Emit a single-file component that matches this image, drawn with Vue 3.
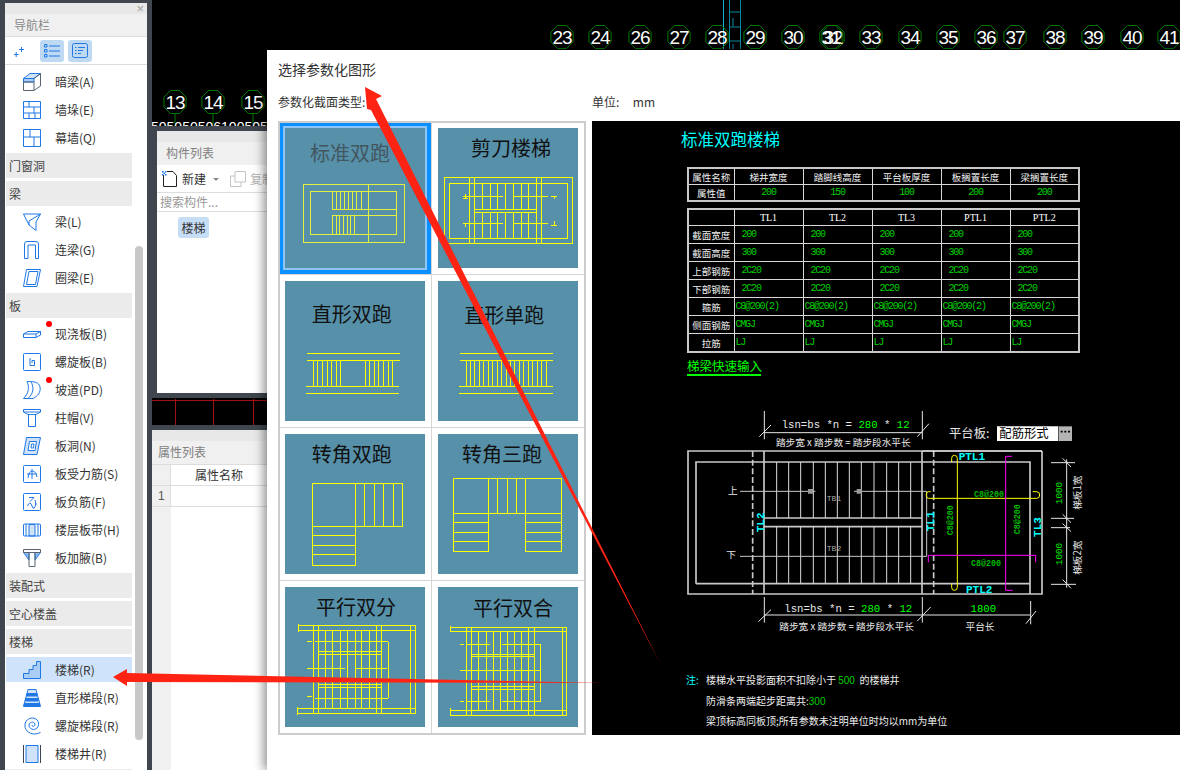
<script setup>
const navItems = [
  { label: '暗梁(A)', icon: 'hidden' },
  { label: '墙垛(E)', icon: 'pier' },
  { label: '幕墙(Q)', icon: 'curtain' },
  { label: '门窗洞', section: true },
  { label: '梁', section: true },
  { label: '梁(L)', icon: 'beam' },
  { label: '连梁(G)', icon: 'link' },
  { label: '圈梁(E)', icon: 'ring' },
  { label: '板', section: true },
  { label: '现浇板(B)', icon: 'slab', dot: true },
  { label: '螺旋板(B)', icon: 'spiralSlab' },
  { label: '坡道(PD)', icon: 'ramp', dot: true },
  { label: '柱帽(V)', icon: 'cap' },
  { label: '板洞(N)', icon: 'hole' },
  { label: '板受力筋(S)', icon: 'rebarS' },
  { label: '板负筋(F)', icon: 'rebarF' },
  { label: '楼层板带(H)', icon: 'strip' },
  { label: '板加腋(B)', icon: 'haunch' },
  { label: '装配式', section: true },
  { label: '空心楼盖', section: true },
  { label: '楼梯', section: true },
  { label: '楼梯(R)', icon: 'stair', active: true },
  { label: '直形梯段(R)', icon: 'flight' },
  { label: '螺旋梯段(R)', icon: 'spiral' },
  { label: '楼梯井(R)', icon: 'well' },
  { label: '', section: true }
]

const blue = '#1f78e6'
const pale = '#cfe2f8'
const icons = {
  hidden: [
    { d: 'M.5 5.5H11L17.5 .5H7Z', fill: pale },
    { d: 'M.5 5.5H11V9H.5Z', fill: '#a9cdf5' },
    { d: 'M.5 9H11V17.5H.5Z', stroke: '#5a6470' },
    { d: 'M11 5.5L17.5 .5V13L11 17.5', stroke: '#5a6470' }
  ],
  pier: [{ d: 'M.5 .5H17.5V17.5H.5Z M.5 6H17.5 M.5 12H17.5 M6 .5V6 M11 6V12 M6 12V17.5 M12 12V17.5' }],
  curtain: [{ d: 'M.5 .5H17.5V17.5H.5Z M.5 8H17.5 M7 .5V8 M11 8V17.5' }],
  beam: [{ d: 'M.5 1H17.5L13 9V17.5L6 12L.5 1 M17.5 1L6 8V12' }],
  link: [{ d: 'M1.5 17.5V3A2.5 2.5 0 0 1 4 .5H13A2.5 2.5 0 0 1 15.5 3V17.5H12.5V4H5V17.5Z' }],
  ring: [{ d: 'M3.5 .5H17.5L14 17.5H.5Z M6 2.5H15L12.5 15.5H3.5Z' }],
  slab: [{ d: 'M.5 9L5 6.5H17.5V10L13 12.5H.5Z M.5 9H13V12.5 M13 9L17.5 6.5' }],
  spiralSlab: [{ d: 'M1.5 .5H16.5A1 1 0 0 1 17.5 1.5V16.5A1 1 0 0 1 16.5 17.5H1.5A1 1 0 0 1 .5 16.5V1.5A1 1 0 0 1 1.5 .5Z M7 5V12.5H11.5V7.5H9V10' }],
  ramp: [{ d: 'M.5 17.5C5 13 7 7 4 .5C11 .5 16 1 17 6C18 11 15 15 10 17.5Z M8 .8C11 6 11 12 5 17.5' }],
  cap: [{ d: 'M.5 .5H17.5V3L13 5.5H5L.5 3Z M.5 3H17.5 M5.5 5.5V17.5H12.5V5.5' }],
  hole: [{ d: 'M3.5 .5H17.5L14 17.5H.5Z', fill: pale }, { d: 'M6.5 4.5H13.5L12 13.5H5Z M8.5 7H11L10.5 11H8Z', fill: '#fff' }],
  rebarS: [{ d: 'M1.5 .5H16.5A1 1 0 0 1 17.5 1.5V16.5A1 1 0 0 1 16.5 17.5H1.5A1 1 0 0 1 .5 16.5V1.5A1 1 0 0 1 1.5 .5Z M4 9H14 M9 4V14 M5 13Q6 6 9 6Q13 6 14 12' }],
  rebarF: [{ d: 'M1.5 .5H16.5A1 1 0 0 1 17.5 1.5V16.5A1 1 0 0 1 16.5 17.5H1.5A1 1 0 0 1 .5 16.5V1.5A1 1 0 0 1 1.5 .5Z M6 4.5H11L7 8.5 M4.5 13Q7 7 9 13T13 10 M12 7L13 12' }],
  strip: [
    { d: 'M6 3.5H12V15H6Z', fill: pale },
    { d: 'M1.5 3H16.5A1 1 0 0 1 17.5 4V14A1 1 0 0 1 16.5 15H1.5A1 1 0 0 1 .5 14V4A1 1 0 0 1 1.5 3Z M3 3V15 M15 3V15' }
  ],
  haunch: [
    { d: 'M.5 3.5L6 11V3.5Z M17.5 3.5L12 11V3.5Z', fill: '#8dbcf2' },
    { d: 'M.5 .5H17.5V3.5H.5Z M6 3.5V17.5H12V3.5', stroke: '#5a6470' }
  ],
  stair: [{ d: 'M.5 17.5V12.5H6V8.5H10V4.5H13.5V.5H17.5V17.5Z', fill: '#a9cdf5' }],
  flight: [
    { d: 'M5 .5H13L17.5 17.5H.5Z', fill: pale },
    { d: 'M4 4.500H14V7H3.300ZM2.800 9.500H15.200V12H2.200ZM1.400 14.500H16.600V17H1Z', fill: blue }
  ],
  spiral: [{ d: 'M17.5 15.5Q10 19 4.5 14.5C-.5 9.500 2 1.500 9 1C15 .8 17.500 7 14 11C11 14 6 12 6 8C6 5 11 4 12 7C12 10 9 10 9 8' }],
  well: [
    { d: 'M3 .5H15V17.5H3Z', fill: pale },
    { d: 'M.5 0V18 M17.500 0V18', stroke: '#3d4650' }
  ]
}

const rulerLow = [
  { n: 13, x: 175 },
  { n: 14, x: 213 },
  { n: 15, x: 253 }
]
const rulerHigh = [
  [23, 562], [24, 600], [26, 640], [27, 679], [28, 717], [29, 755], [30, 793], [32, 833], [31, 831],
  [33, 871], [34, 910], [35, 948], [36, 986], [37, 1015], [38, 1055], [39, 1093], [40, 1132], [41, 1169]
].map(([n, x]) => ({ n, x }))

const octagon = (cx, cy) => {
  const pts = []
  for (let i = 0; i < 8; i++) {
    const a = (Math.PI / 4) * i + Math.PI / 8
    pts.push(`${(cx + Math.cos(a) * 12).toFixed(1)},${(cy + Math.sin(a) * 12.5).toFixed(1)}`)
  }
  return pts.join(' ')
}

// drawing helpers, the tile pictures are 420 units wide for 140px
const box = (x1, y1, x2, y2) => `M${x1} ${y1}H${x2}V${y2}H${x1}Z `
const vs = (xs, y1, y2) => xs.map((x) => `M${x} ${y1}V${y2} `).join('')
const hs = (ys, x1, x2) => ys.map((y) => `M${x1} ${y}H${x2} `).join('')
const steps = (from, to, count) => Array.from({ length: count }, (_, i) => from + ((to - from) * i) / (count - 1))

const tiles = [
  {
    title: '标准双跑', x: 195, y: 98, selected: true,
    d: box(55, 169, 357, 344) + box(75, 189, 335, 319) + vs([250], 169, 344) +
      vs(steps(142, 228, 8), 189, 243) + vs(steps(142, 208, 7), 263, 319) +
      hs([243, 263], 142, 335) + vs([142], 189, 243) + vs([142], 263, 319)
  },
  {
    title: '剪刀楼梯', x: 219, y: 84,
    d: box(19, 148, 403, 346) + box(34, 166, 389, 331) + vs([94, 109, 296, 311], 148, 346) +
      hs([245, 254], 109, 296) + vs([132, 156, 179, 202, 226, 249, 272], 166, 245) +
      vs([132, 156, 179, 202, 226, 249, 272], 254, 331) +
      hs([204, 286], 74, 196) + hs([204, 286], 226, 331) +
      hs([210, 286], 74, 90) + hs([204, 292], 340, 356) + vs([82], 198, 210) + vs([348], 204, 214) + vs([82], 286, 296) + vs([348], 280, 292)
  },
  {
    title: '直形双跑', x: 200, y: 122,
    d: hs([218, 238], 65, 345) + hs([316, 337], 63, 343) + vs(steps(85, 167, 7), 238, 316) + vs(steps(240, 323, 7), 238, 316)
  },
  {
    title: '直形单跑', x: 199, y: 125,
    d: hs([218, 238], 66, 346) + hs([316, 337], 64, 344) + vs(steps(84, 324, 19), 238, 316)
  },
  {
    title: '转角双跑', x: 200, y: 83,
    d: box(82, 148, 353, 278) + box(82, 278, 212, 393) + vs([212, 238, 268, 295, 325], 148, 278) + hs([304, 334, 361], 82, 212)
  },
  {
    title: '转角三跑', x: 192, y: 83,
    d: box(46, 133, 371, 238) + box(46, 238, 152, 353) + box(262, 238, 371, 353) +
      vs([152, 178, 208, 236, 262], 133, 238) + hs([266, 296, 322], 46, 152) + hs([266, 296, 322], 262, 371)
  },
  {
    title: '平行双分', x: 213, y: 84,
    d: hs([116, 131, 364, 380], 40, 392) + vs([375, 392], 116, 380) + vs([85, 101, 275, 290], 116, 380) +
      vs([40], 112, 135) + vs([36], 360, 384) + vs([310], 164, 334) + hs([164, 334], 90, 310) +
      hs([194, 202, 292, 302], 101, 290) + hs([244], 65, 180) + hs([244], 210, 305) +
      hs([164, 329], 66, 80) + vs([120, 142, 165, 188, 210, 230, 253], 131, 364)
  },
  {
    title: '平行双合', x: 225, y: 88,
    d: hs([121, 132, 371, 385], 36, 386) + vs([373, 386], 121, 385) + vs([86, 100, 272, 290], 121, 385) +
      vs([36], 116, 136) + vs([36], 362, 388) + vs([308], 172, 342) +
      hs([172, 342], 86, 156) + hs([172, 342], 191, 308) + hs([201, 207, 297, 307], 100, 290) + hs([251], 66, 308) +
      hs([172, 342], 66, 78) + vs([121, 144, 166, 186, 208, 229, 251], 132, 371)
  }
]

const topHeads = ['属性名称', '梯井宽度', '踏脚线高度', '平台板厚度', '板搁置长度', '梁搁置长度']
const topValues = [200, 150, 100, 200, 200]
const beams = ['TL1', 'TL2', 'TL3', 'PTL1', 'PTL2']
const beamRows = [
  { name: '截面宽度', value: '200', pad: true },
  { name: '截面高度', value: '300', pad: true },
  { name: '上部钢筋', value: '2C20', pad: true },
  { name: '下部钢筋', value: '2C20', pad: true },
  { name: '箍筋', value: 'C8@200(2)' },
  { name: '侧面钢筋', value: 'CMGJ' },
  { name: '拉筋', value: 'LJ' }
]
const treads = [320, 356, 392, 430, 466, 502, 538, 574, 612, 650, 686, 722]
</script>

<template>
  <div class="desktop">
    <svg class="cad-back" width="1180" height="770" viewBox="0 0 1180 770">
      <g fill="none" stroke="#0b8ba3">
        <path d="M723.500 0V49" stroke="#11b5cc" />
        <path d="M729.500 0V49M740.500 0V49M729 12H740M729 27H740M729 41H740M733 18V26M733 44V49" />
      </g>
      <g v-for="mark in rulerHigh" :key="mark.n">
        <polygon :points="octagon(mark.x, 37)" fill="none" stroke="#007a00" />
        <text class="ruler-num" :x="mark.x" y="44">{{ mark.n }}</text>
      </g>
      <g v-for="mark in rulerLow" :key="mark.n">
        <path :d="`M${mark.x} 114V124`" stroke="#007a00" />
        <polygon :points="octagon(mark.x, 102)" fill="none" stroke="#007a00" />
        <text class="ruler-num" :x="mark.x" y="109">{{ mark.n }}</text>
      </g>
      <text class="ruler-dim" x="151" y="132">5050505061005050</text>
      <path d="M152 400.500H267M175.500 399V425M213.500 399V425M253.500 399V425" stroke="#a51010" fill="none" />
    </svg>

    <aside class="sidebar">
      <div class="side-top"><span class="close">×</span></div>
      <div class="side-title">导航栏</div>
      <div class="side-tools">
        <svg class="tool-spark" width="10" height="10" viewBox="0 0 10 10">
          <path d="M0 7.500H4.500M2.200 5V10M5 2.500H10M7.500 0V5" stroke="#1f78e6" fill="none" />
        </svg>
        <span class="tool-btn">
          <svg width="16" height="14" viewBox="0 0 16 14">
            <path d="M5 2H16M5 7H16M5 12H16" stroke="#1f78e6" fill="none" />
            <path d="M.500 .500H3V3H.500ZM.500 5.500H3V8H.500ZM.500 10.500H3V13H.500Z" stroke="#1f78e6" fill="none" />
          </svg>
        </span>
        <span class="tool-btn">
          <svg width="16" height="15" viewBox="0 0 16 15">
            <rect x=".5" y=".5" width="15" height="14" rx="2" fill="none" stroke="#1f78e6" />
            <path d="M3 4.500H4.500M6 4.500H13M3 7.500H4.500M6 7.500H11M3 10.500H4.500M6 10.500H9" stroke="#1f78e6" fill="none" />
          </svg>
        </span>
      </div>
      <div class="nav-list">
        <template v-for="(item, i) in navItems" :key="i">
          <div v-if="item.section" class="nav-section">{{ item.label }}</div>
          <div v-else class="nav-item" :class="{ active: item.active }">
            <svg class="nav-icon" width="18" height="18" viewBox="0 0 18 18">
              <path
                v-for="(p, j) in icons[item.icon]"
                :key="j"
                :d="p.d"
                :fill="p.fill || 'none'"
                :stroke="p.stroke || blue"
              />
            </svg>
            <span>{{ item.label }}</span>
            <i v-if="item.dot" class="red-dot"></i>
          </div>
        </template>
        <div class="scroll-thumb"></div>
      </div>
    </aside>

    <section class="win parts">
      <div class="win-bar"></div>
      <div class="win-title">构件列表</div>
      <div class="parts-tools">
        <svg class="doc-icon" width="16" height="16" viewBox="0 0 16 16">
          <path d="M1.500 4V15.500H14.500V4.500L11 .5H5" fill="none" stroke="#222" />
          <path d="M0 0H1.500V1.500H0ZM3 0H4.500V1.500H3ZM1.500 1.500H3V3H1.500ZM0 3H1.500V4.500H0ZM3 3H4.500V4.500H3Z" fill="#1f78e6" />
        </svg>
        <span class="new-label">新建</span>
        <i class="caret"></i>
        <svg class="copy-icon" width="16" height="16" viewBox="0 0 16 16">
          <path d="M5 .5H15.500V11H5Z M5 5H.5V15.500H11V11" fill="none" stroke="#c4c4c4" />
        </svg>
        <span class="copy-label">复制</span>
      </div>
      <div class="parts-search">搜索构件...</div>
      <div class="parts-list"><span class="chip">楼梯</span></div>
    </section>

    <section class="win props">
      <div class="win-bar"></div>
      <div class="win-title">属性列表</div>
      <div class="prop-head">
        <span class="prop-index"></span>
        <span class="prop-name">属性名称</span>
      </div>
      <div class="prop-row">
        <span class="prop-index">1</span>
        <span class="prop-name"></span>
      </div>
      <div class="prop-rest"><span class="prop-index"></span></div>
    </section>

    <section class="dialog">
      <h1 class="dialog-title">选择参数化图形</h1>
      <div class="dialog-labels">
        <span class="type-label">参数化截面类型:</span>
        <span>单位:&nbsp;&nbsp;&nbsp;&nbsp;&nbsp;mm</span>
      </div>
      <div class="dialog-body">
        <div class="tile-grid">
          <div v-for="tile in tiles" :key="tile.title" class="cell" :class="{ selected: tile.selected }">
            <svg class="tile" width="140" height="140" viewBox="0 0 420 420">
              <text class="tile-title" :x="tile.x" :y="tile.y">{{ tile.title }}</text>
              <path :d="tile.d" fill="none" stroke-width="3" shape-rendering="crispEdges" />
            </svg>
          </div>
        </div>

        <div class="preview">
          <div class="pv-title">标准双跑楼梯</div>
          <table class="pv-table first">
            <colgroup><col v-for="n in 6" :key="n" :class="`col-${n}`" /></colgroup>
            <tbody>
              <tr>
                <td v-for="head in topHeads" :key="head" class="cjk">{{ head }}</td>
              </tr>
              <tr>
                <td class="cjk">属性值</td>
                <td v-for="(v, i) in topValues" :key="i" class="val mid">{{ v }}</td>
              </tr>
            </tbody>
          </table>
          <table class="pv-table second">
            <colgroup><col v-for="n in 6" :key="n" :class="`col-${n}`" /></colgroup>
            <tbody>
              <tr class="beam-head">
                <td></td>
                <td v-for="b in beams" :key="b" class="beam-name">{{ b }}</td>
              </tr>
              <tr v-for="row in beamRows" :key="row.name">
                <td class="cjk">{{ row.name }}</td>
                <td v-for="b in beams" :key="b" class="val" :class="{ pad: row.pad }">{{ row.value }}</td>
              </tr>
            </tbody>
          </table>
          <div class="pv-link">梯梁快速输入</div>

          <svg class="plan" width="420" height="240" viewBox="0 0 1260 720">
            <!-- dimensions above the plan -->
            <g fill="none" stroke="#e6e6e6" stroke-width="3">
              <path d="M283 30V115M757 30V115M283 95H757M268 107L303 72M742 107L777 68" />
              <path d="M283 588V665M757 588V665M1082 600V670M283 642H1082M265 662L303 626M742 660L782 618M1068 668L1098 630" />
              <path d="M1143 185H1215M1143 352H1212M1143 380H1200M1143 550H1218M1190 175V560M1178 172L1203 198M1178 340L1203 365M1178 368L1203 392M1178 536L1203 562" />
            </g>
            <text class="dim" x="335" y="82">lsn=bs *n = <tspan fill="#00ff00">280</tspan> * <tspan fill="#00ff00">12</tspan></text>
            <text class="cn" x="520" y="135" text-anchor="middle">踏步宽 x 踏步数 = 踏步段水平长</text>
            <text class="dim" x="343" y="632">lsn=bs *n = <tspan fill="#00ff00">280</tspan> * <tspan fill="#00ff00">12</tspan></text>
            <text class="dim green" x="940" y="632" text-anchor="middle">1800</text>
            <text class="cn" x="530" y="688" text-anchor="middle">踏步宽 x 踏步数 = 踏步段水平长</text>
            <text class="cn" x="930" y="688" text-anchor="middle">平台长</text>

            <!-- platform slab picker -->
            <text class="cn big" x="837" y="111">平台板:</text>
            <path d="M981 76H1165V120H981Z" fill="#fff" />
            <text class="cn big dark" x="988" y="111">配筋形式</text>
            <path d="M1167 76H1206V120H1167Z" fill="#b4b4b4" />
            <path d="M1172 92H1178M1183 92H1189M1194 92H1200" stroke="#000" stroke-width="5" />

            <!-- plan outline -->
            <g fill="none" stroke="#c8c8c8" stroke-width="5">
              <path d="M757 150H54V579H1116V150" />
              <path d="M78 548V183H1080V579M78 548H1080" />
              <path d="M282 150V579M756 150V579M282 351H756M282 377H756" />
              <path d="M248 150V579M791 150V579" stroke-dasharray="18 8" />
            </g>
            <path d="M757 150H1116" stroke="#fff" stroke-width="4" />
            <path
              :d="treads.map((x) => `M${x} 183V351M${x} 377V548`).join('')"
              stroke="#dcdcdc"
              stroke-width="3"
            />
            <path d="M210 271H436M552 271H770V466H210" fill="none" stroke="#c8c8c8" stroke-width="3" />
            <path d="M414 264H430V278H414ZM560 264H575V278H560Z" fill="#9a9a9a" />
            <text class="cn" x="174" y="280">上</text>
            <text class="cn" x="169" y="472">下</text>
            <text class="small-tag" x="492" y="301" text-anchor="middle">TB1</text>
            <text class="small-tag" x="492" y="451" text-anchor="middle">TB2</text>

            <!-- reinforcement -->
            <g fill="none" stroke="#ffff00" stroke-width="3">
              <path d="M845 183V172Q845 163 853 163Q862 163 862 172V559Q862 568 853 568Q845 568 845 559V548" />
              <path d="M782 272H776Q769 272 769 280V284Q769 292 776 292H1100Q1109 292 1109 282Q1109 272 1100 272H1088" />
            </g>
            <g fill="none" stroke="#ff00ff" stroke-width="3">
              <path d="M1026 166H1007V568H1028" />
              <path d="M775 484V463H1097V484" />
            </g>
            <text class="bar" x="957" y="288" text-anchor="middle">C8@200</text>
            <text class="bar" x="948" y="494" text-anchor="middle">C8@200</text>
            <text class="bar" transform="translate(850 358) rotate(-90)" text-anchor="middle">C8@200</text>
            <text class="bar" transform="translate(1050 355) rotate(-90)" text-anchor="middle">C8@200</text>
            <text class="tag" x="866" y="176">PTL1</text>
            <text class="tag" x="888" y="577">PTL2</text>
            <text class="tag" transform="translate(281 364) rotate(-90)" text-anchor="middle">TL2</text>
            <text class="tag" transform="translate(791 361) rotate(-90)" text-anchor="middle">TL1</text>
            <text class="tag" transform="translate(1113 378) rotate(-90)" text-anchor="middle">TL3</text>
            <text class="one-k" transform="translate(1175 276) rotate(-90)" text-anchor="middle">1000</text>
            <text class="one-k" transform="translate(1175 459) rotate(-90)" text-anchor="middle">1000</text>
            <text class="cn" transform="translate(1233 275) rotate(-90)" text-anchor="middle">梯板1宽</text>
            <text class="cn" transform="translate(1233 470) rotate(-90)" text-anchor="middle">梯板2宽</text>
          </svg>

          <div class="notes">
            <p><b>注:</b>楼梯水平投影面积不扣除小于 <em>500</em>&nbsp;&nbsp;的楼梯井</p>
            <p>防滑条两端起步距离共:<em>300</em></p>
            <p>梁顶标高同板顶;所有参数未注明单位时均以mm为单位</p>
          </div>
        </div>
      </div>
    </section>

    <svg class="arrows" width="1180" height="770" viewBox="0 0 1180 770">
      <polygon points="365,87 382,96 376,99 661,665 371,110 367,109" fill="#ff2313" />
      <polygon points="603,683 127,682 127,686 113,677 127,669 127,673" fill="#ff2313" />
    </svg>
  </div>
</template>

<style>
html,
body {
  margin: 0;
  background: #000;
}
</style>

<style scoped>
.desktop {
  position: relative;
  display: flex;
  width: 1180px;
  height: 770px;
  overflow: hidden;
  background: #000;
  font-family: 'Noto Sans CJK SC', 'Noto Sans', sans-serif;
  font-size: 12px;
  color: #333;
}

.cad-back {
  position: absolute;
  top: 0;
  left: 0;
}

.ruler-num {
  font-family: 'Liberation Sans', sans-serif;
  font-size: 19px;
  letter-spacing: -1px;
  text-anchor: middle;
  fill: #fff;
}

.ruler-dim {
  font-family: 'Liberation Sans', sans-serif;
  font-size: 14px;
  fill: #fff;
}

.sidebar {
  position: relative;
  display: flex;
  flex-direction: column;
  flex: none;
  box-sizing: border-box;
  width: 152px;
  height: 770px;
  padding-top: 3px;
  border-left: 5px solid #3f464e;
  border-right: 5px solid #3f464e;
  background: #3f464e;
}

.side-top {
  display: flex;
  justify-content: flex-end;
  align-items: center;
  height: 11px;
  padding-right: 3px;
  background: #e8e8e8;
}

.close {
  font-family: 'Liberation Sans', sans-serif;
  font-size: 13px;
  line-height: 11px;
  color: #a0a0a0;
}

.side-title {
  height: 22px;
  padding-left: 9px;
  border-bottom: 1px solid #ddd;
  background: #f0f0f0;
  line-height: 22px;
  color: #8a8a8a;
}

.side-tools {
  display: flex;
  align-items: center;
  gap: 4px;
  height: 27px;
  border-bottom: 1px solid #ddd;
  background: #fff;
}

.tool-spark {
  margin: 2px 12px 0 9px;
}

.tool-btn {
  display: flex;
  justify-content: center;
  align-items: center;
  width: 24px;
  height: 22px;
  border-radius: 3px;
  background: #bfd9f3;
}

.nav-list {
  position: relative;
  flex: 1;
  min-height: 0;
  overflow: hidden;
  padding: 4px 0 0 1px;
  background: #fff;
}

.nav-section,
.nav-item {
  position: relative;
  display: flex;
  align-items: center;
  width: 126px;
  height: 25px;
  margin-bottom: 3px;
  white-space: nowrap;
}

.nav-section {
  box-sizing: border-box;
  padding-left: 3px;
  background: #ebebeb;
  color: #444;
}

.nav-item.active {
  background: #cfe4fb;
}

.nav-icon {
  flex: none;
  margin: 0 14px 0 17px;
}

.red-dot {
  position: absolute;
  left: 40px;
  top: 0;
  width: 6px;
  height: 6px;
  border-radius: 50%;
  background: #f00;
}

.scroll-thumb {
  position: absolute;
  left: 130px;
  top: 181px;
  width: 8px;
  height: 494px;
  border-radius: 4px;
  background: #c8c8c8;
}

.win {
  position: absolute;
  display: flex;
  flex-direction: column;
  background: #fff;
  outline: 5px solid #3f464e;
}

.parts {
  left: 157px;
  top: 131px;
  width: 110px;
  height: 262px;
}

.props {
  left: 152px;
  top: 430px;
  width: 115px;
  height: 340px;
}

.win-bar {
  flex: none;
  height: 11px;
  background: #e8e8e8;
}

.win-title {
  flex: none;
  height: 23px;
  padding-left: 9px;
  box-sizing: border-box;
  background: #f0f0f0;
  line-height: 22px;
  color: #808080;
}

.props .win-title {
  padding-left: 6px;
}

.parts-tools {
  display: flex;
  align-items: center;
  flex: none;
  height: 28px;
  overflow: hidden;
  padding-left: 5px;
  box-sizing: border-box;
  border-bottom: 1px solid #ddd;
  white-space: nowrap;
}

.doc-icon {
  flex: none;
}

.new-label {
  flex: none;
  margin-left: 4px;
}

.caret {
  flex: none;
  width: 0;
  height: 0;
  margin: 2px 11px 0 7px;
  border-top: 3px solid #888;
  border-left: 3px solid transparent;
  border-right: 3px solid transparent;
}

.copy-icon {
  flex: none;
}

.copy-label {
  flex: none;
  margin-left: 4px;
  color: #b4b4b4;
}

.parts-search {
  flex: none;
  height: 19px;
  padding-left: 3px;
  border-bottom: 1px solid #ddd;
  box-sizing: border-box;
  line-height: 18px;
  color: #999;
}

.parts-list {
  padding: 5px 0 0 21px;
}

.chip {
  display: inline-block;
  width: 31px;
  height: 21px;
  border-radius: 3px;
  background: #c5ddf5;
  line-height: 21px;
  text-align: center;
}

.prop-head,
.prop-row {
  display: flex;
  flex: none;
  height: 20px;
  border-top: 1px solid #ddd;
  line-height: 20px;
}

.prop-row {
  border-bottom: 1px solid #ddd;
}

.prop-rest {
  display: flex;
  flex: 1;
}

.prop-index {
  flex: none;
  box-sizing: border-box;
  width: 19px;
  padding-left: 6px;
  border-right: 1px solid #ddd;
  background: #f0f0f0;
  font-family: 'Liberation Sans', sans-serif;
  color: #555;
}

.prop-rest .prop-index {
  border-right: 0;
}

.prop-name {
  flex: 1;
  text-align: center;
}

.dialog {
  position: absolute;
  left: 267px;
  top: 50px;
  display: flex;
  flex-direction: column;
  box-sizing: border-box;
  width: 913px;
  height: 720px;
  background: #fff;
  box-shadow: -3px 0 10px rgba(0, 0, 0, 0.45);
}

.dialog-title {
  margin: 0;
  padding: 10px 0 0 11px;
  height: 23px;
  font-size: 14px;
  font-weight: 400;
  line-height: 18px;
}

.dialog-labels {
  display: flex;
  height: 21px;
  padding: 10px 0 0 11px;
  line-height: 18px;
}

.type-label {
  width: 314px;
}

.dialog-body {
  display: flex;
  gap: 6px;
  padding: 7px 0 0 11px;
}

.tile-grid {
  display: grid;
  grid-template-columns: 152px 152px;
  grid-template-rows: 152px 153px 153px 152px;
  flex: none;
  width: 304px;
  height: 610px;
  border: 2px solid #ccc;
}

.cell {
  box-sizing: border-box;
  padding: 6px 0 0 6px;
  border-right: 1px solid #d6d6d6;
  border-bottom: 1px solid #d6d6d6;
}

.cell:nth-child(odd) {
  padding-left: 5px;
}

.cell:nth-child(even) {
  border-right: 0;
}

.cell:nth-child(-n + 2) {
  padding-top: 5px;
}

.cell:nth-last-child(-n + 2) {
  border-bottom: 0;
}

.cell.selected {
  background: #0a90ff;
}

.tile {
  display: block;
  background: #5690a9;
  stroke: #ffff00;
}

.selected .tile {
  box-shadow: 0 0 0 2px #90c4f5;
  stroke: #e4f040;
}

.tile-title {
  font-size: 60px;
  text-anchor: middle;
  fill: #111;
  stroke: none;
}

.selected .tile-title {
  fill: #43565f;
}

.preview {
  flex: none;
  box-sizing: border-box;
  width: 588px;
  height: 614px;
  margin-top: 0;
  padding: 8px 0 0 95px;
  background: #000;
  color: #fff;
}

.pv-title {
  height: 20px;
  margin-left: -6px;
  font-size: 16.5px;
  line-height: 20px;
  color: #00ffff;
}

.pv-table {
  width: 391px;
  border: 2px solid #c8c8c8;
  border-collapse: collapse;
  table-layout: fixed;
  font-size: 10px;
}

.pv-table.first {
  margin-top: 18px;
}

.pv-table.second {
  margin-top: 6px;
}

.pv-table td {
  overflow: hidden;
  height: 15px;
  padding: 0;
  border: 1px solid #d8d8d8;
  line-height: 14px;
  white-space: nowrap;
}

.second td {
  height: 17px;
}

.second .beam-head td {
  height: 15px;
}

.col-1 {
  width: 46px;
}

.col-2,
.col-3,
.col-4,
.col-5,
.col-6 {
  width: 69px;
}

.cjk {
  text-align: center;
  font-size: 9.500px;
  color: #f0f0f0;
}

.val {
  padding-left: 1px !important;
  font-family: 'Liberation Mono', monospace;
  letter-spacing: -1.2px;
  color: #00d000;
}

.val.pad {
  padding-left: 7px !important;
}

.val.mid {
  padding-left: 0 !important;
  text-align: center;
}

.beam-name {
  font-family: 'Liberation Serif', serif;
  font-weight: 400;
  text-align: center;
}

.pv-link {
  display: inline-block;
  margin-top: 5px;
  border-bottom: 2px solid #00ff00;
  width: 74px;
  height: 16px;
  overflow: visible;
  font-size: 12.500px;
  line-height: 16px;
  white-space: nowrap;
  color: #00ff00;
}

.plan {
  display: block;
  margin: 25px 0 0 -17px;
}

.plan text {
  font-family: 'Noto Sans CJK SC', sans-serif;
}

.plan .dim {
  font-family: 'Liberation Mono', monospace;
  font-size: 32px;
  fill: #e8e8e8;
}

.plan .dim.green {
  fill: #00ff00;
}

.plan .cn {
  font-size: 29px;
  fill: #e8e8e8;
}

.plan .big {
  font-size: 37px;
}

.plan .cn.dark {
  fill: #000;
}

.plan .small-tag {
  font-family: 'Liberation Mono', monospace;
  font-size: 24px;
  fill: #aaa;
}

.plan .bar {
  font-family: 'Liberation Mono', monospace;
  font-size: 25px;
  font-weight: 700;
  fill: #00b800;
}

.plan .tag {
  font-family: 'Liberation Mono', monospace;
  font-size: 33px;
  font-weight: 700;
  fill: #00ffff;
}

.plan .one-k {
  font-family: 'Liberation Mono', monospace;
  font-size: 28px;
  fill: #00e000;
}

.notes {
  margin: 29px 0 0 -1px;
  font-size: 10px;
  color: #eee;
}

.notes p {
  height: 20.500px;
  margin: 0;
  padding-left: 20px;
  line-height: 20px;
  white-space: nowrap;
}

.notes b {
  display: inline-block;
  width: 20px;
  margin-left: -20px;
  font-weight: 400;
  color: #00ffff;
}

.notes em {
  font-family: 'Liberation Sans', sans-serif;
  font-style: normal;
  color: #00d000;
}

.arrows {
  position: absolute;
  top: 0;
  left: 0;
  pointer-events: none;
}
</style>
